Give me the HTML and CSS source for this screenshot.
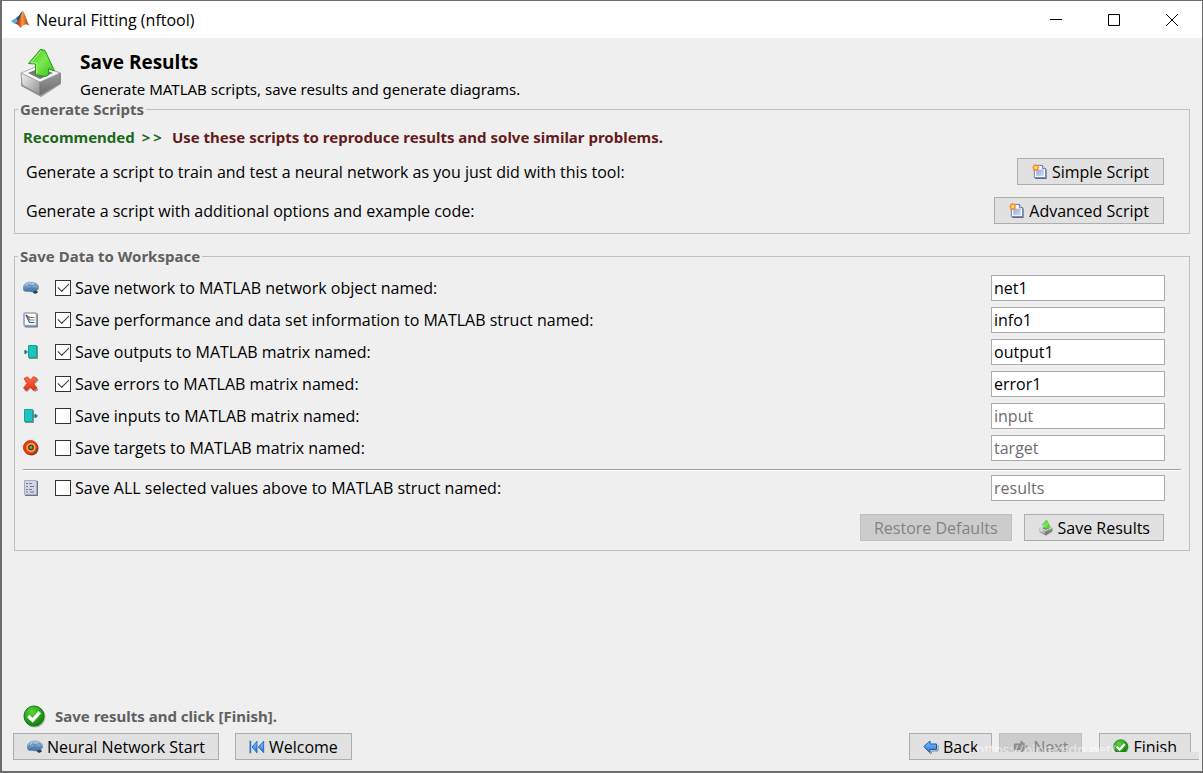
FILE: index.html
```html
<!DOCTYPE html>
<html lang="en">
<head>
<meta charset="utf-8">
<title>Neural Fitting (nftool)</title>
<link rel="stylesheet" href="styles.css">
</head>
<body>
<svg class="defs" aria-hidden="true">
  <defs>
    <linearGradient id="greenUp" x1="0" y1="0" x2="1" y2="1"><stop offset="0" stop-color="#3fc12a"/><stop offset=".5" stop-color="#7bea4c"/><stop offset="1" stop-color="#35b822"/></linearGradient>
    <linearGradient id="trayL" x1="0" y1="0" x2="1" y2="1"><stop offset="0" stop-color="#f4f4f4"/><stop offset="1" stop-color="#8c8c8c"/></linearGradient>
    <linearGradient id="trayR" x1="0" y1="0" x2="0" y2="1"><stop offset="0" stop-color="#9a9a9a"/><stop offset="1" stop-color="#6d6d6d"/></linearGradient>
    <linearGradient id="brainG" x1="0" y1="0" x2="0" y2="1"><stop offset="0" stop-color="#a9cbea"/><stop offset="1" stop-color="#39699f"/></linearGradient>
    <linearGradient id="blueG" x1="0" y1="0" x2="0" y2="1"><stop offset="0" stop-color="#8cc6ff"/><stop offset="1" stop-color="#2272cf"/></linearGradient>
    <linearGradient id="pageG" x1="0" y1="0" x2="1" y2="1"><stop offset="0" stop-color="#93a9d8"/><stop offset="1" stop-color="#d3dcf0"/></linearGradient>
    <linearGradient id="redG" x1="0" y1="0" x2="0" y2="1"><stop offset="0" stop-color="#ff6a45"/><stop offset="1" stop-color="#e2350f"/></linearGradient>
    <linearGradient id="flameG" x1="0" y1="0" x2="1" y2="0"><stop offset="0" stop-color="#8c1c12"/><stop offset=".35" stop-color="#e2571e"/><stop offset=".5" stop-color="#f6a03a"/><stop offset="1" stop-color="#a02312"/></linearGradient>
    <radialGradient id="okG" cx=".4" cy=".3" r=".8"><stop offset="0" stop-color="#5ed43c"/><stop offset="1" stop-color="#067306"/></radialGradient>
    <symbol id="save" viewBox="0 0 42 50">
      <path d="M2 25 21 17 41 25V36L21 49 1 38Z" fill="#9b9b9b"/>
      <path d="M1 25 20 34V47L2 37Z" fill="url(#trayL)" stroke="#858585" stroke-width=".8"/>
      <path d="M20 34 40 25V35L20 47Z" fill="url(#trayR)" stroke="#777" stroke-width=".8"/>
      <path d="M1 25 20 17 40 25 20 34Z" fill="#f5f5f5" stroke="#a5a5a5" stroke-width=".8"/>
      <path d="M8 25 20 20 33 25 20 31Z" fill="#777"/>
      <path d="M20.700 1.300 8.500 15.500 15.500 16V26.500L25 28.500 28.500 27V21L34.500 23 25 2.500Z" fill="url(#greenUp)" stroke="#249c18" stroke-linejoin="round"/>
      <path d="M21 3 11 14.500 16.800 15V25.500" fill="none" stroke="#a3f57f"/>
    </symbol>
    <symbol id="brain" viewBox="0 0 16 16">
      <path d="M8 11 12 14 15 12.500 13 9Z" fill="#303b50"/>
      <path d="M0 8.500C0 5 3 2 7 2S15.500 3.500 16 7.500C16 9.500 14 10.500 12 10.500L9 12 5 11.500C2 12 0 11 0 8.500Z" fill="url(#brainG)" stroke="#6c8fb5" stroke-width=".5"/>
      <path d="M2 7C4 7 4 4 6 5S8 7 10 5 13 6 14 5M4 9C6 10 7 7 9 8S12 9 14 8" fill="none" stroke="#46719f" stroke-width=".6"/>
      <path d="M3 6 5 4M9 4 11 4" stroke="#cfe3f5" stroke-width=".8"/>
    </symbol>
    <symbol id="page" viewBox="0 0 16 17">
      <path d="M3 3H12L15 6V16H3Z" fill="#566483"/>
      <path d="M2 1.500H10.500L14 5V14.500H2Z" fill="#f9fbff" stroke="#647ba8"/>
      <path d="M4 6H12V13H4Z" fill="url(#pageG)"/>
      <path d="M10.500 1.500V5H14" fill="#dce5f7" stroke="#5b75ab"/>
      <path d="M3.500-.2 4.700 1 6.500.8 6.300 2.500 7.500 3.800 6.300 5 6.500 6.800 4.700 6.600 3.500 7.800 2.300 6.600.5 6.800.8 5-.3 3.800.8 2.500.5.8 2.300 1Z" fill="#ff8b38"/>
      <circle cx="3.500" cy="3.800" r="1.700" fill="#ffe45a"/>
    </symbol>
    <symbol id="check" viewBox="0 0 24 24">
      <circle cx="12.500" cy="12.500" r="11" fill="#789078" opacity=".6"/>
      <circle cx="11.500" cy="11.500" r="10.500" fill="url(#okG)" stroke="#087a08"/>
      <path d="M5.500 11.500 10 16 17.500 7.500" fill="none" stroke="#fff" stroke-width="3.500"/>
    </symbol>
    <symbol id="chart" viewBox="0 0 16 16">
      <rect x="1.500" y="1.500" width="13.500" height="14" rx="1" fill="#777b85"/>
      <rect x="1" y="1" width="12.500" height="12.500" rx="1" fill="#fff" stroke="#a0a0b2" stroke-width="1.600"/>
      <path d="M3 3 7 5.500H11.500" fill="none" stroke="#d4495a" stroke-width="1.200"/>
      <path d="M3 3 7 8H11.500" fill="none" stroke="#35a95a" stroke-width="1.200"/>
      <path d="M3 3 6.500 10.500H11.500" fill="none" stroke="#3650b8" stroke-width="1.200"/>
    </symbol>
    <symbol id="output" viewBox="0 0 16 16">
      <path d="M6 2H15V15H6Z" fill="#7f9190"/>
      <path d="M5.500 1.500H13.500V13.500H5.500Z" fill="#19c5bd" stroke="#14a19b"/>
      <path d="M1 8H3M2 6 4.500 8 2 10Z" fill="#257d8b" stroke="#257d8b"/>
    </symbol>
    <symbol id="input" viewBox="0 0 16 16">
      <path d="M2 2H11V15H2Z" fill="#7f9190"/>
      <path d="M1.500 1.500H9.500V13.500H1.500Z" fill="#19c5bd" stroke="#14a19b"/>
      <path d="M10 8H13M12 6 14.500 8 12 10Z" fill="#257d8b" stroke="#257d8b"/>
    </symbol>
    <symbol id="cross" viewBox="0 0 16 16">
      <path d="M3 2 8.500 5 13.500 2 16 4 11.500 8.500 15.500 14 12 16 8 12 4 16 1 14 5 8.500Z" fill="#a29a94"/>
      <path d="M4.500.8 7.500 4 10.500.5 14 2.500 10.500 7.500 14 12 10.500 14.500 7 11 3.500 14.500.5 12 4 7.500 1 2.500Z" fill="url(#redG)" stroke="#d03a1c" stroke-linejoin="round" stroke-width=".8"/>
    </symbol>
    <symbol id="target" viewBox="0 0 16 16">
      <circle cx="8.500" cy="8.500" r="7" fill="#555"/>
      <circle cx="7.500" cy="7.500" r="7" fill="#f03a14" stroke="#b51e08" stroke-width=".8"/>
      <circle cx="8" cy="7.500" r="3.800" fill="#4d4650" stroke="#f7b92c" stroke-width="1.600"/>
      <circle cx="8" cy="7.500" r="1.300" fill="#b99a4d"/>
    </symbol>
    <symbol id="struct" viewBox="0 0 16 16">
      <path d="M2 1H15V16H2Z" fill="#74747e"/>
      <path d="M1.500.5H13.500V14.500H1.500Z" fill="#d4d4e8" stroke="#a9a9c4"/>
      <path d="M3 3.500H5M6 3.500H9M3 6.500H5M7 6.500H11M3 9.500H5M6 9.500H9M3 12H5M7 12H11" stroke="#77779a"/>
    </symbol>
    <symbol id="rewind" viewBox="0 0 18 16">
      <path d="M9 1.500 3.500 8 9 14.500ZM16.500 1.500 10.500 8 16.500 14.500Z" fill="url(#blueG)" stroke="#1f65b8" stroke-linejoin="round"/>
      <path d="M1.500 1V15" stroke="#2d79d0" stroke-width="2"/>
    </symbol>
    <symbol id="left" viewBox="0 0 16 16">
      <path d="M2 9 8 15 9 12H15V6" fill="none" stroke="#888"/>
      <path d="M.8 7.500 7 2V5H13.500V10.500H7V13.500Z" fill="url(#blueG)" stroke="#185dac" stroke-linejoin="round"/>
    </symbol>
    <symbol id="right" viewBox="0 0 16 16">
      <path d="M14.500 7.500 8 2V5H1.500V10.500H8V13.500Z" fill="#929292" stroke="#858585" stroke-linejoin="round"/>
    </symbol>
  </defs>
</svg>

<div class="window">
  <header class="titlebar">
    <svg class="logo" viewBox="0 0 20 20" aria-hidden="true">
      <path d="M1 11 6 8 9 11 5 14Z" fill="#62a8d6"/>
      <path d="M6 8C9 7 10 3 13 1L9 12 5 14 8 11Z" fill="#2c4a80"/>
      <path d="M13 1C15 3 17 12 19.500 16 16 13 13 15 10.500 18 9 16 8 14 5 14 10 12 10 5 13 1Z" fill="url(#flameG)"/>
    </svg>
    <span class="title">Neural Fitting (nftool)</span>
    <button class="caption" aria-label="Minimize"><svg viewBox="0 0 12 12"><path d="M0 5.500H12" stroke="#000"/></svg></button>
    <button class="caption" aria-label="Maximize"><svg viewBox="0 0 12 12"><path d="M.5.5H11.500V11.500H.5Z" fill="none" stroke="#000"/></svg></button>
    <button class="caption" aria-label="Close"><svg viewBox="0 0 12 12"><path d="M0 0 12 12M12 0 0 12" stroke="#000"/></svg></button>
  </header>

  <main class="content">
    <section class="intro">
      <svg class="intro-icon" aria-hidden="true"><use href="#save"/></svg>
      <div>
        <h1>Save Results</h1>
        <p>Generate MATLAB scripts, save results and generate diagrams.</p>
      </div>
    </section>

    <fieldset class="group scripts">
      <legend>Generate Scripts</legend>
      <p class="advice"><span class="green">Recommended <span class="angle">&gt;</span><span class="angle">&gt;</span></span><span class="maroon">Use these scripts to reproduce results and solve similar problems.</span></p>
      <div class="script-row"><span>Generate a script to train and test a neural network as you just did with this tool:</span><button class="btn"><svg class="icon" aria-hidden="true"><use href="#page"/></svg>Simple Script</button></div>
      <div class="script-row"><span>Generate a script with additional options and example code:</span><button class="btn"><svg class="icon" aria-hidden="true"><use href="#page"/></svg>Advanced Script</button></div>
    </fieldset>

    <fieldset class="group data">
      <legend>Save Data to Workspace</legend>
      <div class="row"><svg class="icon" aria-hidden="true"><use href="#brain"/></svg><label><input type="checkbox" checked>Save network to MATLAB network object named:</label><input class="field" type="text" aria-label="Network name" value="net1"></div>
      <div class="row"><svg class="icon" aria-hidden="true"><use href="#chart"/></svg><label><input type="checkbox" checked>Save performance and data set information to MATLAB struct named:</label><input class="field" type="text" aria-label="Information name" value="info1"></div>
      <div class="row"><svg class="icon" aria-hidden="true"><use href="#output"/></svg><label><input type="checkbox" checked>Save outputs to MATLAB matrix named:</label><input class="field" type="text" aria-label="Outputs name" value="output1"></div>
      <div class="row"><svg class="icon" aria-hidden="true"><use href="#cross"/></svg><label><input type="checkbox" checked>Save errors to MATLAB matrix named:</label><input class="field" type="text" aria-label="Errors name" value="error1"></div>
      <div class="row"><svg class="icon" aria-hidden="true"><use href="#input"/></svg><label><input type="checkbox">Save inputs to MATLAB matrix named:</label><input class="field" type="text" aria-label="Inputs name" value="input" disabled></div>
      <div class="row"><svg class="icon" aria-hidden="true"><use href="#target"/></svg><label><input type="checkbox">Save targets to MATLAB matrix named:</label><input class="field" type="text" aria-label="Targets name" value="target" disabled></div>
      <hr>
      <div class="row"><svg class="icon" aria-hidden="true"><use href="#struct"/></svg><label><input type="checkbox">Save ALL selected values above to MATLAB struct named:</label><input class="field" type="text" aria-label="Struct name" value="results" disabled></div>
      <div class="actions"><button class="btn" disabled>Restore Defaults</button><button class="btn"><svg class="icon" aria-hidden="true"><use href="#save"/></svg>Save Results</button></div>
    </fieldset>
  </main>

  <footer>
    <p class="status"><svg class="status-icon" aria-hidden="true"><use href="#check"/></svg>Save results and click [Finish].</p>
    <nav class="nav">
      <button class="btn start"><svg class="icon" aria-hidden="true"><use href="#brain"/></svg>Neural Network Start</button>
      <button class="btn welcome"><svg class="icon" aria-hidden="true"><use href="#rewind"/></svg>Welcome</button>
      <span class="spacer"></span>
      <button class="btn back"><svg class="icon" aria-hidden="true"><use href="#left"/></svg>Back</button>
      <button class="btn next" disabled><svg class="icon" aria-hidden="true"><use href="#right"/></svg>Next</button>
      <button class="btn finish"><svg class="icon" aria-hidden="true"><use href="#check"/></svg>Finish</button>
      <span class="watermark">https://blog.csdn.net/</span>
      <span class="strip"></span>
    </nav>
  </footer>
</div>
</body>
</html>
```
FILE: styles.css
```css
* { box-sizing: border-box; }
body { margin: 0; background: #777; color: #000; font: 16px/20px "Open Sans", "Noto Sans", sans-serif; }
button, input { font: inherit; color: inherit; }
p, h1 { margin: 0; }
.defs { position: absolute; width: 0; height: 0; }
.window { display: flex; flex-direction: column; min-height: 100vh; border: 1px solid #6c6c6c; border-left-width: 2px; border-bottom-width: 2px; background: #efefef; }
.titlebar { display: flex; align-items: center; height: 37px; padding: 0 1px 0 8px; background: #fff; }
.logo { width: 20px; height: 20px; margin-right: 6px; }
.title { flex: 1; }
.caption { display: flex; align-items: center; justify-content: center; width: 58px; height: 36px; padding: 0; border: 0; background: none; }
.caption svg { width: 12px; height: 12px; }
.content { flex: 1; padding: 10px 12px 0; }
.intro { display: flex; gap: 18px; padding-left: 6px; height: 53px; }
.intro-icon { width: 42px; height: 50px; }
.intro h1 { font-size: 19px; line-height: 28px; }
.intro p { font-family: "Noto Sans", "Open Sans", sans-serif; font-size: 15px; line-height: 26px; }
.group { min-width: 0; margin: 0; border: 1px solid #bfbfbf; }
.group legend { margin-left: -5px; padding: 0 2px; color: #606060; line-height: 16px; }
.group legend, .advice, .status { font-family: "Noto Sans", "Open Sans", sans-serif; font-size: 15px; font-weight: 700; }
.scripts { padding: 10px 25px 3px 8px; margin-bottom: 14px; }
.advice { display: flex; gap: 10px; padding-bottom: 5px; }
.green { color: #1d681d; }
.angle { margin-left: 3px; }
.maroon { color: #641b1b; }
.script-row { display: flex; align-items: center; justify-content: space-between; height: 39px; padding-left: 3px; }
.btn { display: inline-flex; align-items: center; justify-content: center; gap: 4px; height: 27px; padding: 0 14px; border: 1px solid #adadad; border-radius: 0; background: #e1e1e1; white-space: nowrap; }
.btn:disabled { border-color: #bfbfbf; background: #ccc; color: #838383; }
.icon { flex: none; width: 16px; height: 16px; }
.data { padding: 8px 8px 9px; }
.row { display: flex; align-items: center; height: 32px; padding-right: 16px; }
.row label { display: flex; align-items: center; flex: 1; padding-left: 16px; }
.row input[type="checkbox"] { appearance: none; display: grid; place-items: center; width: 16px; height: 16px; margin: 0 4px 0 0; border: 1px solid #333; background: #fff; }
.row input[type="checkbox"]:checked::before { content: ""; width: 10px; height: 5px; margin-bottom: 4px; border: solid #333; border-width: 0 0 1px 1px; rotate: -45deg; }
.field { width: 174px; height: 26px; padding: 0 2px; border: 1px solid #abadb3; border-radius: 0; background: #fff; }
.field:disabled { color: #6d6d6d; }
hr { height: 2px; margin: 5px 0 1px; border: 0; border-top: 1px solid #a0a0a0; background: #fff; }
.actions { display: flex; justify-content: flex-end; gap: 12px; padding: 10px 17px 0 0; }
.actions .btn { padding: 0 13px; }
footer { padding: 0 11px 11px; }
.status { display: flex; align-items: center; gap: 9px; height: 28px; padding-left: 10px; color: #606060; }
.status-icon { width: 23px; height: 23px; }
.nav { position: relative; display: flex; padding-top: 3px; }
.nav .btn { padding: 0 13px; }
.welcome { margin-left: 16px; }
.spacer { flex: 1; }
.next { margin: 0 17px 0 7px; }
.watermark { position: absolute; right: 75px; bottom: 0; color: rgba(255, 255, 255, .6); font-size: 14px; }
.strip { position: absolute; right: -8px; bottom: 0; width: 230px; height: 8px; border-bottom: 1px solid #adadad; background: #e1e1e1; }
```
